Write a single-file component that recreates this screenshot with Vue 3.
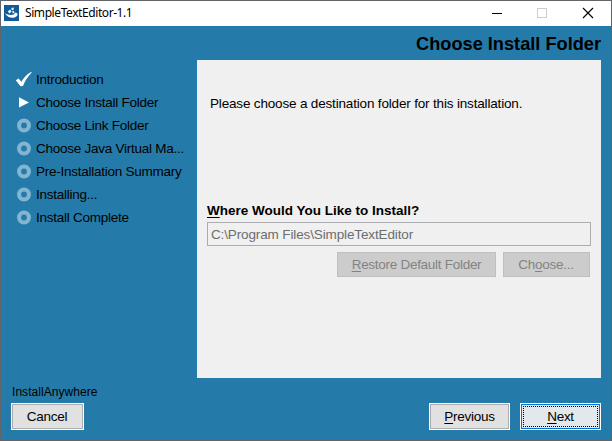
<script setup>
const steps = [
  { label: 'Introduction', state: 'done' },
  { label: 'Choose Install Folder', state: 'current' },
  { label: 'Choose Link Folder', state: 'todo' },
  { label: 'Choose Java Virtual Ma...', state: 'todo' },
  { label: 'Pre-Installation Summary', state: 'todo' },
  { label: 'Installing...', state: 'todo' },
  { label: 'Install Complete', state: 'todo' },
]
</script>

<template>
  <div class="window">
    <header class="titlebar">
      <svg class="logo" width="15" height="16" viewBox="0 0 15 16">
        <rect width="15" height="16" fill="#135a9b" />
        <path d="M1 8C3 9.600 5 10 7.200 9.900C9.500 9.800 10.800 9 11 7.500C14 7.800 14.300 9.900 12.300 11.500C9.500 13.800 3.500 13.200 1 8Z" fill="#fff" />
        <path d="M3.800 6.300L6.300 4.500L7.500 6.800L5.300 8.400ZM7.200 3.500L9.200 2.300L10 4.300L8 5.400ZM8.200 6.600L9.900 5.800L10.500 7.500L8.700 8.400Z" fill="#f0f6fb" />
      </svg>
      <span class="title">SimpleTextEditor-1.1</span>
      <svg class="controls" width="138" height="25" viewBox="0 0 138 25" fill="none" shape-rendering="crispEdges">
        <path d="M19 12.500H29" stroke="#000" />
        <rect x="64.500" y="7.500" width="9" height="9" stroke="#ccc" />
        <path d="M110 7L120 17M120 7L110 17" stroke="#000" shape-rendering="auto" stroke-width="1.100" />
      </svg>
    </header>
    <main class="body">
      <h1>Choose Install Folder</h1>
      <div class="middle">
        <ul class="steps">
          <li v-for="s in steps" :key="s.label">
            <svg width="18" height="18" viewBox="0 0 18 18">
              <path v-if="s.state === 'done'" d="M0.800 9.300L3.600 7.600L6.300 10.800Q10 4.500 15.500 1.200L17 1.300Q10.800 7.500 8 15L5.500 15.300Z" fill="#fff" />
              <path v-else-if="s.state === 'current'" d="M4 3.300L14 8.400L4 13.500Z" fill="#fff" />
              <circle v-else cx="9" cy="8.500" r="4.950" fill="none" stroke="#83b4d0" stroke-width="4.100" />
            </svg>
            <span>{{ s.label }}</span>
          </li>
        </ul>
        <section class="panel">
          <p class="intro">Please choose a destination folder for this installation.</p>
          <label><u>W</u>here Would You Like to Install?</label>
          <div class="field"><span>C:\Program Files\SimpleTextEditor</span></div>
          <div class="actions">
            <button class="off restore" disabled><span><u>R</u>estore Default Folder</span></button>
            <button class="off choose" disabled><span>Ch<u>o</u>ose...</span></button>
          </div>
        </section>
      </div>
      <div class="brand"><span>InstallAnywhere</span></div>
      <footer>
        <button class="nav cancel"><span>Cancel</span></button>
        <button class="nav previous"><span><u>P</u>revious</span></button>
        <button class="nav next"><span><u>N</u>ext</span></button>
      </footer>
    </main>
  </div>
</template>

<style>
body { margin: 0; }
</style>

<style scoped>
* { box-sizing: border-box; }
.window {
  width: 612px; height: 441px; overflow: hidden;
  border: 1px solid #626469;
  background: #247ba9;
  font: 13.5px/16px "Liberation Sans", Arial, sans-serif;
  color: #000;
  white-space: nowrap;
}
.titlebar { display: flex; height: 25px; background: #fff; align-items: flex-start; }
.logo { margin: 4px 0 0 3px; }
.title { font: 12px/16px "Noto Sans", sans-serif; margin: 4px 0 0 6px; letter-spacing: -0.42px; }
.controls { margin-left: auto; }
.body { display: flex; flex-direction: column; height: 414px; }
h1 { margin: 0; height: 34px; padding: 7px 10px 0 0; text-align: right; font-size: 18.2px; line-height: 22px; }
.middle { display: flex; height: 318px; }
.steps { list-style: none; width: 196px; margin: 0; padding: 8px 0 0 14px; letter-spacing: -0.25px; }
.steps li { display: flex; height: 23px; align-items: center; gap: 3px; }
.panel { width: 404px; background: #f0f0f0; padding: 36px 10px 0; }
.intro { margin: 0 0 90px 3px; height: 16px; letter-spacing: -0.17px; }
label { display: block; height: 20px; font-weight: bold; line-height: 17px; }
.field { height: 24px; border: 1px solid #abadb3; padding: 4px 0 0 3px; color: #6d6d6d; letter-spacing: -0.13px; }
.actions { display: flex; justify-content: flex-end; gap: 7px; padding: 6px 1px 0 0; }
button { font: inherit; letter-spacing: -0.28px; padding: 0; color: #000; display: flex; align-items: center; justify-content: center; border-radius: 0; }
u { text-decoration: underline; text-decoration-thickness: 1px; text-underline-offset: 2px; text-decoration-skip-ink: none; }
.off { height: 25px; border: 1px solid #bfbfbf; background: #ccc; color: #838383; }
.restore { width: 159px; }
.choose { width: 87px; }
.choose span { margin-right: 1px; }
.brand { height: 25px; padding: 6px 0 0 11px; font-size: 12px; letter-spacing: 0.05px; }
footer { display: flex; padding: 0 10px; height: 27px; }
.nav { height: 27px; border: 1px solid #fff; background: #e1e1e1; box-shadow: inset 0 0 0 1px #adadad; }
.cancel { width: 73px; }
.cancel span { margin-right: 1px; }
.previous { width: 81px; margin-left: auto; }
.next { width: 81px; margin-left: 10px; box-shadow: inset 0 0 0 1px #0078d7; background: #e3e8ed; padding: 2px; }
.next span { border: 1px dotted #000; width: 100%; height: 100%; line-height: 19px; }
</style>
